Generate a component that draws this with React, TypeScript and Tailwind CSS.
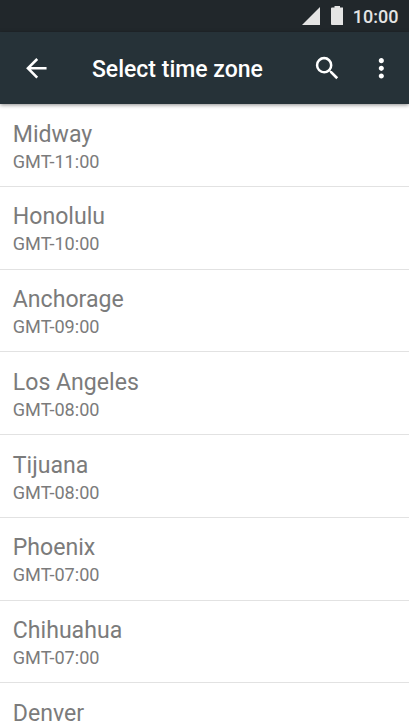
import React from 'react';

interface TimeZone {
  city: string;
  offset?: string;
}

const timeZones: TimeZone[] = [
  { city: 'Midway', offset: 'GMT-11:00' },
  { city: 'Honolulu', offset: 'GMT-10:00' },
  { city: 'Anchorage', offset: 'GMT-09:00' },
  { city: 'Los Angeles', offset: 'GMT-08:00' },
  { city: 'Tijuana', offset: 'GMT-08:00' },
  { city: 'Phoenix', offset: 'GMT-07:00' },
  { city: 'Chihuahua', offset: 'GMT-07:00' },
  { city: 'Denver' },
];

const Icon = ({ path }: { path: string }) => (
  <svg viewBox="0 0 24 24" fill="currentColor" className="size-[30.67px]">
    <path d={path} />
  </svg>
);

const StatusBar = () => (
  <div className="flex h-8 shrink-0 items-center justify-end bg-[#21272b] pr-[10.5px] text-[#e4e4e4]">
    <svg viewBox="0 0 18 18" fill="currentColor" className="mr-[10.5px] size-[18px]">
      <path d="M18 0v18H0z" />
    </svg>
    <svg viewBox="0 0 12.5 19" fill="currentColor" className="mr-[9.5px] mb-px h-[19px] w-[12.5px]">
      <path d="M3.5 0h5.5v1.5h2.5a1 1 0 0 1 1 1v15.500a1 1 0 0 1-1 1H1a1 1 0 0 1-1-1V2.500a1 1 0 0 1 1-1h2.500z" />
    </svg>
    <span className="pt-px text-[18px] leading-8 font-medium">10:00</span>
  </div>
);

const AppBar = () => (
  <header className="relative flex h-[72px] shrink-0 items-center bg-[#263238] pr-[12.5px] pl-[20.7px] text-white shadow-[0_1px_4px_rgba(0,0,0,0.45)]">
    <button type="button" aria-label="Back">
      <Icon path="M20 11H7.83l5.59-5.59L12 4l-8 8 8 8 1.41-1.41L7.83 13H20v-2z" />
    </button>
    <h1 className="ml-[40.6px] flex-1 pt-1 text-[23px] font-medium whitespace-nowrap">
      Select time zone
    </h1>
    <button type="button" aria-label="Search">
      <Icon path="M15.5 14h-.79l-.28-.27A6.471 6.471 0 0 0 16 9.5 6.5 6.5 0 1 0 9.5 16c1.61 0 3.09-.59 4.23-1.57l.27.28v.79l5 4.99L20.49 19l-4.99-5zm-6 0C7.01 14 5 11.99 5 9.5S7.01 5 9.5 5 14 7.01 14 9.5 11.99 14 9.5 14z" />
    </button>
    <button type="button" aria-label="More options" className="ml-[23.5px]">
      <Icon path="M12 8c1.1 0 2-.9 2-2s-.9-2-2-2-2 .9-2 2 .9 2 2 2zm0 2c-1.1 0-2 .9-2 2s.9 2 2 2 2-.9 2-2-.9-2-2-2zm0 6c-1.1 0-2 .9-2 2s.9 2 2 2 2-.9 2-2-.9-2-2-2z" />
    </button>
  </header>
);

const TimeZoneRow = ({ city, offset }: TimeZone) => (
  <li className="h-[82.75px] border-b border-[#e2e2e2] pt-[16.6px] pl-[12.8px] text-[#7b7b7b]">
    <p className="text-[23.1px] leading-[27px]">{city}</p>
    {offset && <p className="text-[18.1px] leading-[28.6px]">{offset}</p>}
  </li>
);

export default function App() {
  return (
    <div className="flex h-[728px] w-full flex-col overflow-hidden bg-white font-[Roboto,sans-serif]">
      <StatusBar />
      <AppBar />
      <ul className="min-h-0 flex-1 overflow-hidden">
        {timeZones.map((zone) => (
          <TimeZoneRow key={zone.city} {...zone} />
        ))}
      </ul>
    </div>
  );
}
